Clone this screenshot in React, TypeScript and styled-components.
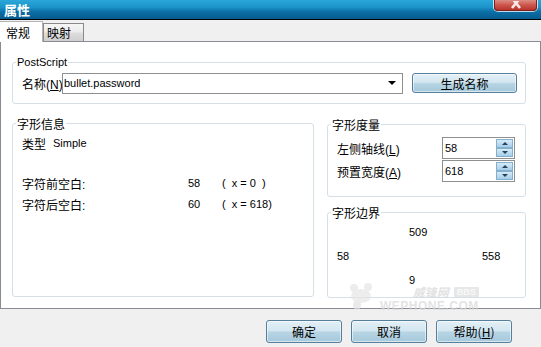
import React from "react";
import styled, { createGlobalStyle } from "styled-components";

const GlobalStyle = createGlobalStyle`
  html, body { margin: 0; padding: 0; }
  body {
    background: #f0f0f0;
    font-family: "Liberation Sans", "Noto Sans CJK SC", sans-serif;
    font-size: 12px;
    color: #000;
  }
`;

const Window = styled.div`
  position: relative;
  width: 541px;
  height: 347px;
  overflow: hidden;
  display: flex;
  flex-direction: column;
  background: #f0f0f0;
`;

const TitleBar = styled.div`
  height: 19px;
  flex: none;
  display: flex;
  align-items: flex-start;
  background: linear-gradient(#2ba7da 0%, #1a93c8 40%, #0c70a7 60%, #065a8e 100%);
  border-bottom: 1px solid #000;
`;

const Title = styled.div`
  color: #fff;
  font-family: "Noto Sans CJK SC", sans-serif;
  font-weight: bold;
  font-size: 13px;
  line-height: 19px;
  padding-left: 4px;
`;

const CloseButton = styled.div`
  margin-left: auto;
  margin-right: 4px;
  width: 43px;
  height: 11px;
  box-sizing: border-box;
  border: 1px solid #7a2020;
  border-top: none;
  border-radius: 0 0 4px 4px;
  background: linear-gradient(#dc8d84, #cc564c 50%, #b8342b);
  box-shadow: 0 0 0 1px rgba(255, 255, 255, 0.75);
  display: flex;
  justify-content: center;
  align-items: flex-end;
  overflow: hidden;
`;

const TabStrip = styled.div`
  height: 21px;
  flex: none;
  display: flex;
  align-items: flex-end;
  position: relative;
  z-index: 1;
`;

const Tab = styled.div<{ $active?: boolean }>`
  box-sizing: border-box;
  font-family: "Noto Sans CJK SC", sans-serif;
  font-size: 12px;
  display: flex;
  align-items: center;
  border: 1px solid ${(p) => (p.$active ? "#b4b4b4" : "#8a8a8a")};
  border-bottom: none;
  ${(p) =>
    p.$active
      ? `
    width: 43px;
    height: 21px;
    margin-bottom: -1px;
    padding-left: 6px;
    background: #fff;
    border-left: none;
  `
      : `
    width: 41px;
    height: 18px;
    padding-left: 3px;
    background: linear-gradient(#f6f6f6 0%, #ececec 45%, #dcdcdc 55%, #cfcfcf 100%);
  `}
`;

const Panel = styled.div`
  height: 268px;
  flex: none;
  box-sizing: border-box;
  width: 541px;
  border: 1px solid #898c95;
  background: #fff;
  padding: 20px 0 0 11px;
  display: flex;
  flex-direction: column;
`;

const Group = styled.div`
  position: relative;
  box-sizing: border-box;
  border: 1px solid #d5dfe5;
  border-radius: 3px;
  flex: none;
`;

const Legend = styled.span`
  position: absolute;
  top: -8px;
  left: 3px;
  padding: 0 1px;
  background: #fff;
  line-height: 15px;
  font-family: "Noto Sans CJK SC", sans-serif;
  font-size: 12px;
`;

const LatinLegend = styled(Legend)`
  font-family: "Liberation Sans", sans-serif;
  font-size: 11px;
`;

const PostScriptGroup = styled(Group)`
  width: 514px;
  height: 42px;
  display: flex;
  align-items: center;
  padding-left: 9px;
`;

const FieldLabel = styled.span<{ $w: number }>`
  width: ${(p) => p.$w}px;
  flex: none;
  white-space: nowrap;
  font-size: 12px;
`;

const Key = styled.span`
  text-decoration: underline;
`;

const Combo = styled.div`
  width: 341px;
  height: 21px;
  box-sizing: border-box;
  border: 1px solid #8e8f8f;
  background: #fff;
  display: flex;
  align-items: center;
  padding: 0 6px 0 1px;
`;

const ComboText = styled.span`
  flex: 1;
  font-size: 11px;
`;

const ComboArrow = styled.span`
  width: 0;
  height: 0;
  border-left: 4px solid transparent;
  border-right: 4px solid transparent;
  border-top: 4px solid #000;
`;

const AeroButton = styled.button<{ $w: number; $h: number }>`
  width: ${(p) => p.$w}px;
  height: ${(p) => p.$h}px;
  box-sizing: border-box;
  flex: none;
  border: 1px solid #55809d;
  border-radius: 3px;
  background: linear-gradient(#e4f0f6 0%, #d3e6f0 46%, #b6d4e4 54%, #a6c9db 100%);
  box-shadow: inset 0 0 0 1px rgba(255, 255, 255, 0.55);
  font-family: "Noto Sans CJK SC", sans-serif;
  font-size: 12px;
  color: #000;
  padding: 0;
  margin: 0;
  display: flex;
  align-items: center;
  justify-content: center;
`;

const GenerateButton = styled(AeroButton)`
  margin-left: 9px;
`;

const LowerArea = styled.div`
  display: flex;
  align-items: flex-start;
  gap: 13px;
  margin-top: 19px;
`;

const InfoGroup = styled(Group)`
  width: 302px;
  height: 174px;
  padding: 9px 0 0 9px;
`;

const InfoRow = styled.div<{ $gapTop: number }>`
  display: grid;
  grid-template-columns: 166px 34px auto;
  height: 20px;
  align-items: center;
  margin-top: ${(p) => p.$gapTop}px;
`;

const TypeRow = styled.div`
  display: flex;
  align-items: center;
  gap: 7px;
  height: 20px;
`;

const Latin = styled.span`
  font-family: "Liberation Sans", sans-serif;
  font-size: 11px;
  white-space: pre;
`;

const RightColumn = styled.div`
  display: flex;
  flex-direction: column;
  gap: 15px;
  margin-top: 1px;
`;

const MetricsGroup = styled(Group)`
  width: 199px;
  height: 73px;
  padding: 12px 0 0 9px;
  display: flex;
  flex-direction: column;
  gap: 1px;
`;

const MetricRow = styled.div`
  display: flex;
  align-items: center;
  height: 22px;
`;

const SpinBox = styled.div`
  width: 73px;
  height: 22px;
  box-sizing: border-box;
  border: 1px solid #8e8f8f;
  background: #fff;
  display: flex;
  padding: 1px;
`;

const SpinValue = styled.span`
  flex: 1;
  font-family: "Liberation Sans", sans-serif;
  font-size: 11px;
  line-height: 18px;
  padding-left: 1px;
`;

const SpinButtons = styled.div`
  width: 17px;
  display: flex;
  flex-direction: column;
`;

const SpinHalf = styled.div`
  flex: 1;
  box-sizing: border-box;
  border: 1px solid #85afcc;
  background: linear-gradient(#d6ebf7, #a6cde8);
  display: flex;
  align-items: center;
  justify-content: center;
`;

const ArrowUp = styled.span`
  width: 0;
  height: 0;
  border-left: 3px solid transparent;
  border-right: 3px solid transparent;
  border-bottom: 3px solid #24425f;
`;

const ArrowDown = styled.span`
  width: 0;
  height: 0;
  border-left: 3px solid transparent;
  border-right: 3px solid transparent;
  border-top: 3px solid #24425f;
`;

const BoundsGroup = styled(Group)`
  width: 199px;
  height: 86px;
  padding: 7px 0 0 9px;
  display: grid;
  grid-template-columns: 72px 73px auto;
  grid-template-rows: 24px 24px 24px;
  align-items: center;
  align-content: start;
`;

const Cell = styled(Latin)<{ $col: number; $row: number }>`
  grid-column: ${(p) => p.$col};
  grid-row: ${(p) => p.$row};
`;

const Footer = styled.div`
  flex: 1;
  display: flex;
  justify-content: flex-end;
  align-items: flex-start;
  gap: 9px;
  padding: 11px 29px 0 0;
`;

const Watermark = styled.div`
  position: absolute;
  left: 346px;
  top: 283px;
  display: flex;
  align-items: flex-start;
  gap: 4px;
  opacity: 0.7;
  pointer-events: none;
`;

const WatermarkText = styled.div`
  display: flex;
  flex-direction: column;
  align-items: flex-end;
  padding-top: 3px;
`;

const WatermarkCn = styled.div`
  display: flex;
  align-items: center;
  gap: 5px;
  font-family: "Noto Sans CJK SC", sans-serif;
  font-style: italic;
  font-weight: bold;
  font-size: 12px;
  line-height: 12px;
  color: #d6d6d6;
`;

const BbsBadge = styled.span`
  font-family: "Liberation Sans", sans-serif;
  font-style: normal;
  font-size: 9px;
  line-height: 10px;
  padding: 0 3px;
  background: #dedede;
  color: #f6f6f6;
  border-radius: 1px;
`;

const WatermarkEn = styled.div`
  font-family: "Liberation Sans", sans-serif;
  font-weight: bold;
  font-size: 12px;
  line-height: 12px;
  letter-spacing: 0.5px;
  color: #d8d8d8;
  margin-top: 2px;
`;

export default function App() {
  return (
    <>
      <GlobalStyle />
      <Window>
        <TitleBar>
          <Title>属性</Title>
          <CloseButton>
            <svg width="12" height="9" viewBox="0 0 12 9">
              <path d="M1 -4 L10 7 M11 -4 L2 7" stroke="#fbe8e8" strokeWidth="2.6" fill="none" />
            </svg>
          </CloseButton>
        </TitleBar>

        <TabStrip>
          <Tab $active>常规</Tab>
          <Tab>映射</Tab>
        </TabStrip>

        <Panel>
          <PostScriptGroup>
            <LatinLegend>PostScript</LatinLegend>
            <FieldLabel $w={40}>
              名称(<Key>N</Key>)
            </FieldLabel>
            <Combo>
              <ComboText>bullet.password</ComboText>
              <ComboArrow />
            </Combo>
            <GenerateButton $w={105} $h={20}>生成名称</GenerateButton>
          </PostScriptGroup>

          <LowerArea>
            <InfoGroup>
              <Legend>字形信息</Legend>
              <TypeRow>
                <span>类型</span>
                <Latin>Simple</Latin>
              </TypeRow>
              <InfoRow $gapTop={20}>
                <span>字符前空白:</span>
                <Latin>58</Latin>
                <Latin>{"(  x = 0  )"}</Latin>
              </InfoRow>
              <InfoRow $gapTop={1}>
                <span>字符后空白:</span>
                <Latin>60</Latin>
                <Latin>{"(  x = 618)"}</Latin>
              </InfoRow>
            </InfoGroup>

            <RightColumn>
              <MetricsGroup>
                <Legend>字形度量</Legend>
                <MetricRow>
                  <FieldLabel $w={105}>
                    左侧轴线(<Key>L</Key>)
                  </FieldLabel>
                  <SpinBox>
                    <SpinValue>58</SpinValue>
                    <SpinButtons>
                      <SpinHalf><ArrowUp /></SpinHalf>
                      <SpinHalf><ArrowDown /></SpinHalf>
                    </SpinButtons>
                  </SpinBox>
                </MetricRow>
                <MetricRow>
                  <FieldLabel $w={105}>
                    预置宽度(<Key>A</Key>)
                  </FieldLabel>
                  <SpinBox>
                    <SpinValue>618</SpinValue>
                    <SpinButtons>
                      <SpinHalf><ArrowUp /></SpinHalf>
                      <SpinHalf><ArrowDown /></SpinHalf>
                    </SpinButtons>
                  </SpinBox>
                </MetricRow>
              </MetricsGroup>

              <BoundsGroup>
                <Legend>字形边界</Legend>
                <Cell $col={2} $row={1}>509</Cell>
                <Cell $col={1} $row={2}>58</Cell>
                <Cell $col={3} $row={2}>558</Cell>
                <Cell $col={2} $row={3}>9</Cell>
              </BoundsGroup>
            </RightColumn>
          </LowerArea>
        </Panel>

        <Footer>
          <AeroButton $w={76} $h={23}>确定</AeroButton>
          <AeroButton $w={76} $h={23}>取消</AeroButton>
          <AeroButton $w={76} $h={23}>
            帮助(<Key>H</Key>)
          </AeroButton>
        </Footer>

        <Watermark>
          <svg width="30" height="28" viewBox="0 0 30 28">
            <circle cx="8" cy="5" r="4" fill="#e4e4e4" />
            <circle cx="22" cy="4" r="4" fill="#e4e4e4" />
            <ellipse cx="15" cy="13" rx="10" ry="7" fill="#e6e6e6" />
            <ellipse cx="11" cy="22" rx="4" ry="5" fill="#e2e2e2" />
          </svg>
          <WatermarkText>
            <WatermarkCn>
              威锋网<BbsBadge>BBS</BbsBadge>
            </WatermarkCn>
            <WatermarkEn>WEPHONE.COM</WatermarkEn>
          </WatermarkText>
        </Watermark>
      </Window>
    </>
  );
}
